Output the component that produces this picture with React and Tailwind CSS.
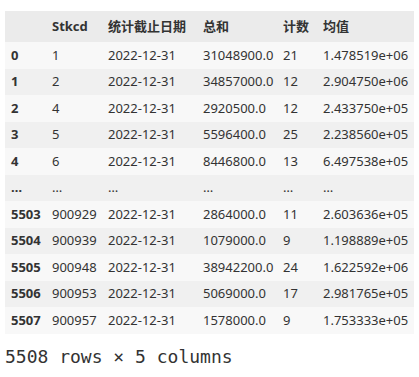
const columns = ["Stkcd", "统计截止日期", "总和", "计数", "均值"]

const rows = [
  ["0", "1", "2022-12-31", "31048900.0", "21", "1.478519e+06"],
  ["1", "2", "2022-12-31", "34857000.0", "12", "2.904750e+06"],
  ["2", "4", "2022-12-31", "2920500.0", "12", "2.433750e+05"],
  ["3", "5", "2022-12-31", "5596400.0", "25", "2.238560e+05"],
  ["4", "6", "2022-12-31", "8446800.0", "13", "6.497538e+05"],
  ["…", "…", "…", "…", "…", "…"],
  ["5503", "900929", "2022-12-31", "2864000.0", "11", "2.603636e+05"],
  ["5504", "900939", "2022-12-31", "1079000.0", "9", "1.198889e+05"],
  ["5505", "900948", "2022-12-31", "38942200.0", "24", "1.622592e+06"],
  ["5506", "900953", "2022-12-31", "5069000.0", "17", "2.981765e+05"],
  ["5507", "900957", "2022-12-31", "1578000.0", "9", "1.753333e+05"],
]

export default function App() {
  return (
    <div className="bg-white w-[419px] h-[377px] pt-[11px] pl-[5px] text-[#333] font-['Noto_Sans','Noto_Sans_CJK_SC',sans-serif] text-[13px]">
      <table className="table-fixed border-collapse w-[409px]">
        <colgroup>
          <col className="w-[41px]" />
          <col className="w-[56px]" />
          <col className="w-[95px]" />
          <col className="w-[80px]" />
          <col className="w-[40px]" />
          <col className="w-[97px]" />
        </colgroup>
        <thead>
          <tr className="bg-[#ebebeb] h-[31px]">
            <th></th>
            {columns.map((c) => (
              <th key={c} className="text-left font-bold pl-[6px] whitespace-nowrap">
                {c}
              </th>
            ))}
          </tr>
        </thead>
        <tbody>
          {rows.map((r, i) => (
            <tr key={i} className={`h-[26.5px] ${i % 2 === 0 ? "bg-[#f8f8f8]" : "bg-[#f0f0f0]"}`}>
              {r.map((v, j) => (
                <td
                  key={j}
                  className={`text-left pl-[6px] whitespace-nowrap leading-none ${j === 0 ? "font-bold" : ""}`}
                >
                  {v}
                </td>
              ))}
            </tr>
          ))}
        </tbody>
      </table>
      <div className="mt-[11px] font-['DejaVu_Sans_Mono',monospace] text-[18px] leading-[24px] text-[#333]">
        5508 rows × 5 columns
      </div>
    </div>
  )
}
